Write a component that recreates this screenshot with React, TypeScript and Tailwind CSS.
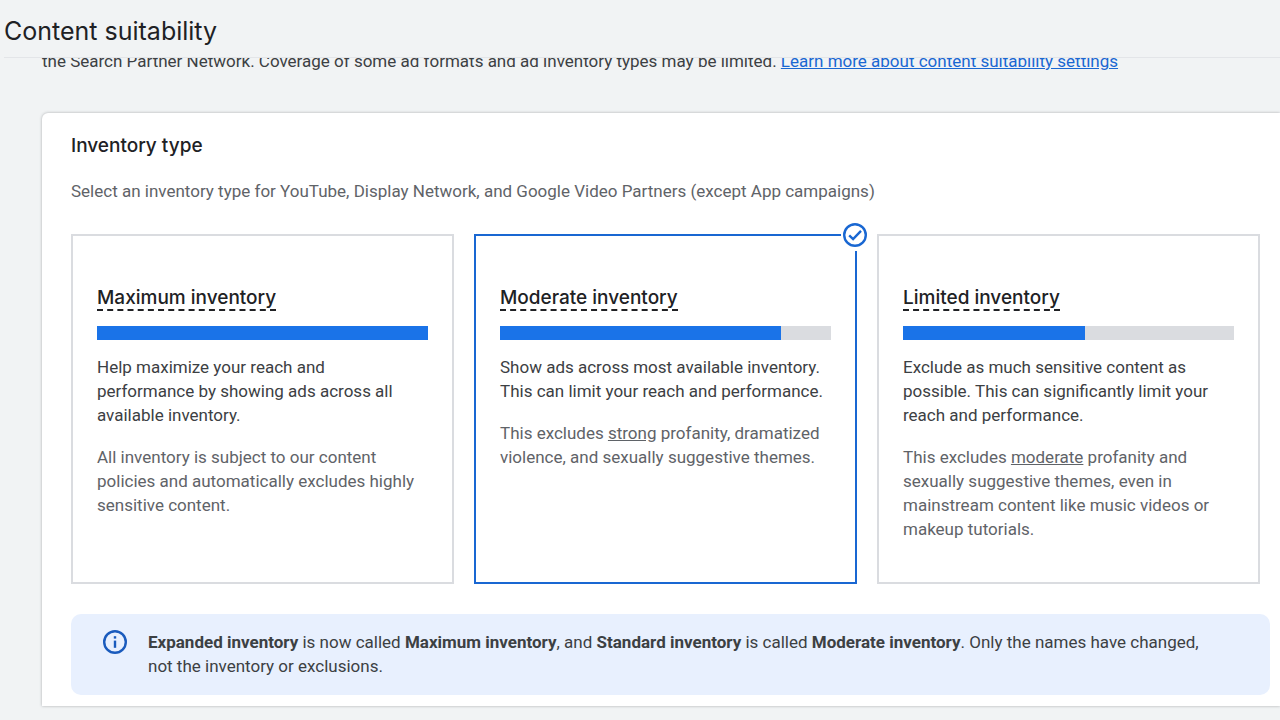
import { useState } from "react";
import type { ReactNode } from "react";

type InventoryOption = {
  id: string;
  title: string;
  reach: number;
  summary: string;
  detail: ReactNode;
};

const options: InventoryOption[] = [
  {
    id: "maximum",
    title: "Maximum inventory",
    reach: 100,
    summary:
      "Help maximize your reach and performance by showing ads across all available inventory.",
    detail:
      "All inventory is subject to our content policies and automatically excludes highly sensitive content.",
  },
  {
    id: "moderate",
    title: "Moderate inventory",
    reach: 85,
    summary:
      "Show ads across most available inventory. This can limit your reach and performance.",
    detail: (
      <>
        This excludes <span className="underline">strong</span> profanity, dramatized violence, and
        sexually suggestive themes.
      </>
    ),
  },
  {
    id: "limited",
    title: "Limited inventory",
    reach: 55,
    summary:
      "Exclude as much sensitive content as possible. This can significantly limit your reach and performance.",
    detail: (
      <>
        This excludes <span className="underline">moderate</span> profanity and sexually suggestive
        themes, even in mainstream content like music videos or makeup tutorials.
      </>
    ),
  },
];

function CheckBadge() {
  return (
    <span className="absolute -top-[17px] -right-4 bg-white p-1 pl-[2px]" aria-hidden="true">
      <svg viewBox="0 0 24 24" className="size-6" fill="none" stroke="#1967d2">
        <circle cx="12" cy="12" r="10.8" strokeWidth="2.4" />
        <path d="M6.2 12.3 L10.1 16.1 L18 7.8" strokeWidth="2.4" />
      </svg>
    </span>
  );
}

function InfoIcon() {
  return (
    <svg viewBox="0 0 24 24" className="size-6 shrink-0" fill="none" aria-hidden="true">
      <circle cx="12" cy="12" r="10.8" stroke="#1a5bbd" strokeWidth="2.4" />
      <rect x="10.8" y="10.6" width="2.4" height="7.2" fill="#1a5bbd" />
      <rect x="10.8" y="6.2" width="2.4" height="2.4" fill="#1a5bbd" />
    </svg>
  );
}

function InventoryCard({
  option,
  selected,
  onSelect,
}: {
  option: InventoryOption;
  selected: boolean;
  onSelect: () => void;
}) {
  return (
    <label
      className={`relative block cursor-pointer border-2 px-6 pt-[50px] pb-[41px] ${
        selected ? "border-[#1967d2]" : "border-[#dadce0]"
      }`}
    >
      <input
        type="radio"
        name="inventory"
        value={option.id}
        checked={selected}
        onChange={onSelect}
        className="sr-only"
      />
      {selected && <CheckBadge />}
      <span className="inline-block border-b-2 border-dashed border-[#202124] font-['Inter','Roboto',sans-serif] text-[19px]/[23px] font-medium text-[#202124]">
        {option.title}
      </span>
      <span className="mt-[15px] block h-[14px] bg-[#dadce0]">
        <span className="block h-full bg-[#1a73e8]" style={{ width: `${option.reach}%` }} />
      </span>
      <span className="mt-[15px] block pr-1 text-[17px]/6 text-[#3c4043]">{option.summary}</span>
      <span className="mt-[18px] block pr-1 text-[17px]/6 text-[#5f6368]">{option.detail}</span>
    </label>
  );
}

export default function App() {
  const [selected, setSelected] = useState("moderate");

  return (
    <div className="min-h-screen overflow-hidden bg-[#f1f3f4] font-['Roboto','Liberation_Sans',sans-serif]">
      <header className="relative z-10 bg-[#f1f3f4] pl-1">
        <div className="border-b border-[#e3e5e8] pt-[13px] pb-2">
          <h1 className="font-['Inter','Roboto',sans-serif] text-[25px]/9 text-[#202124]">
            Content suitability
          </h1>
        </div>
      </header>
      <main className="-mt-[9px] pl-[42px]">
        <p className="text-[17px]/6 text-[#3c4043]">
          the Search Partner Network. Coverage of some ad formats and ad inventory types may be
          limited.{" "}
          <a href="#content-suitability" className="text-[#1967d2] underline">
            Learn more about content suitability settings
          </a>
        </p>
        <section className="mt-10 rounded-tl-md bg-white pt-[21px] pb-[11px] pl-[29px] shadow-[0_0_3px_rgba(60,64,67,0.4)]">
          <h2 className="font-['Inter','Roboto',sans-serif] text-[19px]/6 font-medium text-[#202124]">
            Inventory type
          </h2>
          <p className="mt-[21px] text-[17px]/6 text-[#5f6368]">
            Select an inventory type for YouTube, Display Network, and Google Video Partners (except
            App campaigns)
          </p>
          <div className="mt-[31px] grid grid-cols-3 gap-5 pr-5">
            {options.map((option) => (
              <InventoryCard
                key={option.id}
                option={option}
                selected={selected === option.id}
                onSelect={() => setSelected(option.id)}
              />
            ))}
          </div>
          <aside className="mt-[30px] mr-[10px] flex gap-[21px] rounded-[10px] bg-[#e8f0fe] pt-4 pr-12 pb-[17px] pl-8">
            <InfoIcon />
            <p className="text-[17px]/6 text-[#3c4043]">
              <b className="font-bold">Expanded inventory</b> is now called{" "}
              <b className="font-bold">Maximum inventory</b>, and{" "}
              <b className="font-bold">Standard inventory</b> is called{" "}
              <b className="font-bold">Moderate inventory</b>. Only the names have changed, not the
              inventory or exclusions.
            </p>
          </aside>
        </section>
      </main>
    </div>
  );
}
